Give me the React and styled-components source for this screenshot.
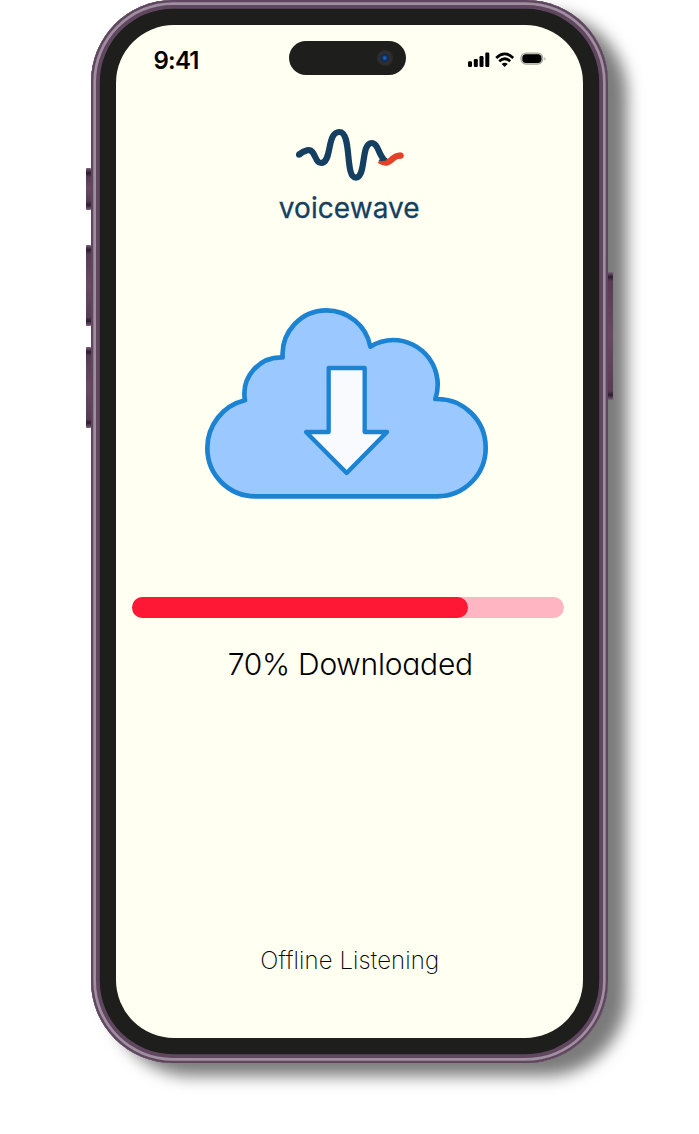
import React from 'react';
import styled, { createGlobalStyle } from 'styled-components';

const GlobalStyle = createGlobalStyle`
  * { box-sizing: border-box; }
  body { margin: 0; background: #fff; overflow: hidden; }
`;

const Stage = styled.main`
  width: 699px;
  height: 1134px;
  padding-left: 90.5px;
  background: #fff;
`;

const Phone = styled.div`
  position: relative;
  width: 517.5px;
  height: 1063.4px;
  padding: 25px 25px;
  border-radius: 82px;
  background: #1e1e1c;
  box-shadow:
    inset 0 0 0 2.3px #60475f,
    inset 0 0 0 5px #a08fa1,
    inset 0 0 0 8.8px #60475f,
    19px 13px 16px rgba(0, 0, 0, 0.52);
`;

const SideButton = styled.span`
  position: absolute;
  ${({ $side }) => ($side === 'left' ? 'left: -4.5px;' : 'right: -4.5px;')}
  top: ${({ $top }) => $top}px;
  width: 4.5px;
  height: ${({ $height }) => $height}px;
  border-radius: 1px;
  background: linear-gradient(
    #7d627c 0, #2c1c2f 5px, #573c55 9px, #684863 50%,
    #573c55 calc(100% - 9px), #2c1c2f calc(100% - 5px), #7d627c 100%
  );
`;

const Screen = styled.section`
  display: flex;
  flex-direction: column;
  align-items: center;
  width: 467.5px;
  height: 1013.4px;
  border-radius: 58px;
  background: #fffff2;
  overflow: hidden;
`;

const StatusBar = styled.header`
  display: grid;
  grid-template-columns: 173.5px 116.5px 1fr;
  align-items: center;
  width: 100%;
  height: 34px;
  margin-top: 15.6px;
  flex: none;
`;

const Time = styled.span`
  padding: 5px 0 0 38px;
  font: 600 24px/29px Inter, sans-serif;
  letter-spacing: -0.8px;
  color: #000;
`;

const Island = styled.div`
  display: flex;
  align-items: center;
  justify-content: flex-end;
  height: 34px;
  padding-right: 13px;
  border-radius: 17px;
  background: #1e1e1c;
`;

const Lens = styled.i`
  width: 16px;
  height: 16px;
  border-radius: 50%;
  background: radial-gradient(circle at 48% 50%, #2e6fb8 0, #0c4289 2px, #0b2448 3.5px, #303033 4.5px, #29292b 8px);
`;

const StatusIcons = styled.svg`
  margin: 5px 0 0 62.2px;
`;

const Brand = styled.div`
  display: flex;
  flex-direction: column;
  align-items: center;
  margin-top: 53.4px;
  height: 100px;
`;

const Wave = styled.svg`
  flex: none;
  margin-left: 1px;
`;

const BrandName = styled.span`
  margin-top: 8.6px;
  font: 400 28px/34px Inter, sans-serif;
  letter-spacing: 0.05px;
  -webkit-text-stroke: 0.3px #153f60;
  color: #153f60;
`;

const Cloud = styled.svg`
  flex: none;
  margin: 67.4px 0 0 -4px;
`;

const Track = styled.div`
  flex: none;
  width: 432px;
  height: 21px;
  margin: 86.6px 3px 0 0;
  border-radius: 10.5px;
  background: #ffb6c2;
`;

const Fill = styled.div`
  height: 100%;
  border-radius: inherit;
  background: #ff1736;
`;

const Progress = styled.p`
  margin: 28px 0 0 2px;
  font: 300 30px/37px Inter, sans-serif;
  font-feature-settings: 'cv11';
  letter-spacing: -0.25px;
  color: #000;
`;

const Caption = styled.p`
  margin: auto 0 62.4px 1px;
  font: 200 24px/30px Inter, sans-serif;
  letter-spacing: 0.1px;
  color: #000;
`;

const progress = 77.8;

export default function App() {
  return (
    <Stage>
      <GlobalStyle />
      <Phone>
        <SideButton $side="left" $top={168} $height={42} />
        <SideButton $side="left" $top={245} $height={81} />
        <SideButton $side="left" $top={347} $height={81} />
        <SideButton $side="right" $top={272} $height={128} />
        <Screen>
          <StatusBar>
            <Time>9:41</Time>
            <Island><Lens /></Island>
            <StatusIcons width="80" height="16" viewBox="0 0 80 16">
              <rect x="0" y="9.2" width="4" height="5.8" rx="1.2" />
              <rect x="5.8" y="7" width="4" height="8" rx="1.2" />
              <rect x="11.5" y="4" width="4" height="11" rx="1.2" />
              <rect x="17.3" y="0.5" width="4" height="14.5" rx="1.2" />
              <g fill="none" stroke="#000" strokeWidth="2.7">
                <path d="M28.2 5.9Q36.7 -2.2 45.2 5.9" />
                <path d="M31.2 9.2Q36.7 4.3 42.2 9.2" />
              </g>
              <path d="M33.7 12Q36.7 9.7 39.7 12L36.7 15Z" />
              <rect x="52.9" y="1" width="21.8" height="11.2" rx="5" fill="#c5c5bd" stroke="#a8a8a1" strokeWidth="1.1" />
              <rect x="54.3" y="2.3" width="19.2" height="8.6" rx="3.9" />
              <path d="M76.4 5Q78.8 6.8 76.4 8.6Z" fill="#a8a8a1" />
            </StatusIcons>
          </StatusBar>
          <Brand>
            <Wave width="108" height="54" viewBox="77 39 324 162" fill="none" strokeWidth="18.5">
              <path d="M327 136C350 150 358 139 367 131Q378 121 391 122" stroke="#e34229" />
              <circle cx="391" cy="122" r="9.2" fill="#e34229" />
              <path d="M86 119C102 105 119 101 127 112C137 126 139 144 152 144C186 144 168 51 207 51C246 51 223 188 256 188C289 188 270 84 304 84C324 84 325 122 341 132" stroke="#153f60" />
              <path d="M324 137L340 122L352 131L345 137Z" fill="#153f60" />
              <circle cx="86" cy="119" r="9.2" fill="#153f60" />
            </Wave>
            <BrandName>voicewave</BrandName>
          </Brand>
          <Cloud width="305" height="215" viewBox="0 0 915 645" stroke="#1c82d2" strokeWidth="14" strokeLinejoin="round">
            <path
              fill="#9bc8ff"
              d="M181 604A144 144 0 0 1 37 460A147 147 0 0 1 150 316A110 110 0 0 1 263 187A132 132 0 0 1 394 46A134 134 0 0 1 526 155A134 134 0 0 1 595 135A134 134 0 0 1 721 312A146 146 0 0 1 872 459A145 145 0 0 1 727 604Z"
            />
            <path fill="#f8fafd" strokeWidth="13" d="M401 219H509V411H576L455 534L333 411H401Z" />
          </Cloud>
          <Track><Fill style={{ width: `${progress}%` }} /></Track>
          <Progress>70% Downloaded</Progress>
          <Caption>Offline Listening</Caption>
        </Screen>
      </Phone>
    </Stage>
  );
}
